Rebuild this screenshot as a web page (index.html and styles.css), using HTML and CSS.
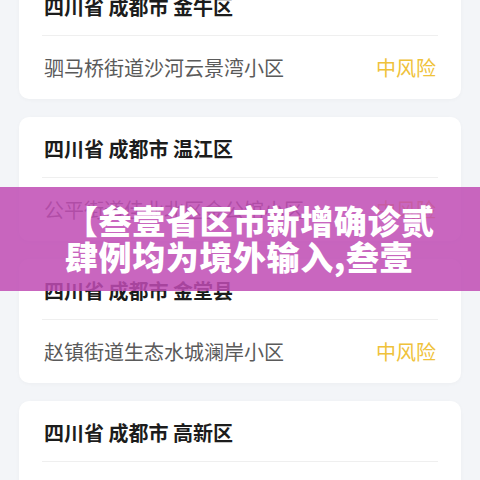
FILE: index.html
```html
<!DOCTYPE html>
<html>

<head>
    <meta charset="utf-8">
    <title>风险地区</title>
    <link rel="stylesheet" href="styles.css">
</head>

<body>
    <div class="list">
        <div class="card">
            <div class="card-title">四川省 成都市 金牛区</div>
            <div class="card-row">
                <span class="addr">驷马桥街道沙河云景湾小区</span>
                <span class="risk">中风险</span>
            </div>
        </div>
        <div class="card">
            <div class="card-title">四川省 成都市 温江区</div>
            <div class="card-row">
                <span class="addr">公平街道佳业北区金公馆小区</span>
                <span class="risk">中风险</span>
            </div>
        </div>
        <div class="card">
            <div class="card-title">四川省 成都市 金堂县</div>
            <div class="card-row">
                <span class="addr">赵镇街道生态水城澜岸小区</span>
                <span class="risk">中风险</span>
            </div>
        </div>
        <div class="card">
            <div class="card-title">四川省 成都市 高新区</div>
            <div class="card-row">
                <span class="addr">中和街道应龙湾澜岸小区</span>
                <span class="risk">中风险</span>
            </div>
        </div>
    </div>

    <div class="banner">
        <p>【叁壹省区市新增确诊贰<br>肆例均为境外输入,叁壹</p>
    </div>
</body>

</html>
```

FILE: styles.css
```css
html,
body {
    margin: 0;
    padding: 0;
}

body {
    background: #f3f5f8;
    font-family: "Noto Sans CJK SC", "Noto Sans", sans-serif;
    height: 480px;
    overflow: hidden;
    position: relative;
}

.list {
    display: flex;
    flex-direction: column;
    gap: 18px;
    margin-top: -25px;
    padding: 0 19px;
}

.card {
    background: #fff;
    border-radius: 10px;
    padding: 0 23px;
    box-shadow: 0 1px 4px rgba(0, 0, 0, 0.03);
}

.card-title {
    height: 61px;
    line-height: 63px;
    padding: 0 2px;
    border-bottom: 1px solid #efefef;
    font-size: 20px;
    font-weight: bold;
    color: #1c1c1c;
    box-sizing: border-box;
}

.card-row {
    display: flex;
    justify-content: space-between;
    align-items: center;
    height: 63px;
    padding: 0 2px;
    font-size: 20px;
}

.card-row .addr {
    color: #5a5a5a;
}

.card-row .risk {
    color: #efc23a;
}

.banner {
    position: absolute;
    top: 187px;
    left: 0;
    right: 0;
    height: 104px;
    background: rgba(191, 75, 180, 0.85);
    display: flex;
    align-items: center;
}

.banner p {
    margin: 0 0 2px 65px;
    font-size: 33px;
    line-height: 36px;
    letter-spacing: 0.6px;
    font-weight: 900;
    color: #fff;
    white-space: nowrap;
}
```
